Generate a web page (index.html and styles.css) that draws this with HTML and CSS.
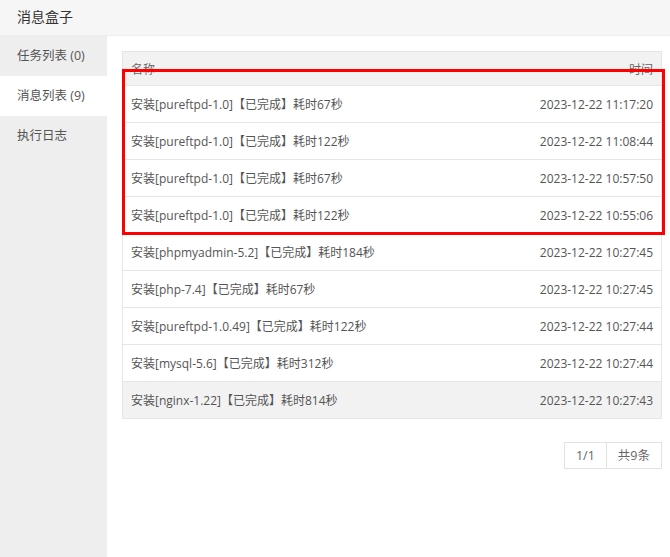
FILE: index.html
```html
<!DOCTYPE html>
<html lang="zh-CN">
<head>
  <meta charset="UTF-8" />
  <meta name="viewport" content="width=device-width, initial-scale=1.0" />
  <title>消息盒子</title>
  <link rel="stylesheet" href="styles.css">
</head>
<body>
  <div class="title-bar">消息盒子</div>

  <div class="main">
    <ul class="side-menu">
      <li class="menu-item">任务列表 (0)</li>
      <li class="menu-item active">消息列表 (9)</li>
      <li class="menu-item">执行日志</li>
    </ul>

    <div class="content">
      <table class="msg-table">
        <thead>
          <tr>
            <th>名称</th>
            <th class="col-time">时间</th>
          </tr>
        </thead>
        <tbody>
          <tr><td>安装[pureftpd-1.0]【已完成】耗时67秒</td><td class="col-time">2023-12-22 11:17:20</td></tr>
          <tr><td>安装[pureftpd-1.0]【已完成】耗时122秒</td><td class="col-time">2023-12-22 11:08:44</td></tr>
          <tr><td>安装[pureftpd-1.0]【已完成】耗时67秒</td><td class="col-time">2023-12-22 10:57:50</td></tr>
          <tr><td>安装[pureftpd-1.0]【已完成】耗时122秒</td><td class="col-time">2023-12-22 10:55:06</td></tr>
          <tr><td>安装[phpmyadmin-5.2]【已完成】耗时184秒</td><td class="col-time">2023-12-22 10:27:45</td></tr>
          <tr><td>安装[php-7.4]【已完成】耗时67秒</td><td class="col-time">2023-12-22 10:27:45</td></tr>
          <tr><td>安装[pureftpd-1.0.49]【已完成】耗时122秒</td><td class="col-time">2023-12-22 10:27:44</td></tr>
          <tr><td>安装[mysql-5.6]【已完成】耗时312秒</td><td class="col-time">2023-12-22 10:27:44</td></tr>
          <tr class="hover"><td>安装[nginx-1.22]【已完成】耗时814秒</td><td class="col-time">2023-12-22 10:27:43</td></tr>
        </tbody>
      </table>

      <div class="pager">
        <span class="pager-cell">1/1</span>
        <span class="pager-cell">共9条</span>
      </div>

      <!-- highlight around the pureftpd rows -->
      <div class="highlight"></div>
    </div>
  </div>
</body>
</html>
```

FILE: styles.css
```css
:root {
  font-family: "Open Sans", "Noto Sans CJK SC", sans-serif;
}

body {
  margin: 0;
  background: #fff;
  color: #555;
}

.title-bar {
  height: 35px;
  line-height: 34px;
  padding-left: 17px;
  font-size: 14px;
  color: #333;
  background: #f6f6f6;
  border-bottom: 1px solid #eee;
}

.main {
  display: flex;
  min-height: 521px;
}

.side-menu {
  width: 107px;
  margin: 0;
  padding: 0;
  list-style: none;
  background: #eee;
}

.menu-item {
  height: 40px;
  line-height: 40px;
  padding-left: 17px;
  font-size: 12.5px;
  color: #555;
}

.menu-item.active {
  background: #fff;
}

.content {
  position: relative;
  flex: 1;
  padding: 15px 8px 0 15px;
}

.msg-table {
  width: 100%;
  border-collapse: separate;
  border-spacing: 0;
  border: 1px solid #e6e6e6;
  border-bottom: none;
  font-size: 12px;
}

.msg-table th,
.msg-table td {
  padding: 0 8px;
  text-align: left;
  border-bottom: 1px solid #e6e6e6;
}

.msg-table th {
  height: 33px;
  font-weight: normal;
  color: #666;
  background: #f2f2f2;
}

.msg-table td {
  height: 36px;
  color: #555;
}

.msg-table .col-time {
  text-align: right;
}

.msg-table tr.hover td {
  background: #f2f2f2;
}

.pager {
  display: flex;
  justify-content: flex-end;
  margin-top: 23px;
}

.pager-cell {
  height: 25px;
  line-height: 25px;
  padding: 0 11px;
  font-size: 12.5px;
  color: #666;
  border: 1px solid #e2e2e2;
}

.pager-cell + .pager-cell {
  border-left: none;
}

.highlight {
  position: absolute;
  left: 15px;
  top: 33px;
  width: 543px;
  height: 166px;
  box-sizing: border-box;
  border: 3px solid #f00;
  pointer-events: none;
}
```
